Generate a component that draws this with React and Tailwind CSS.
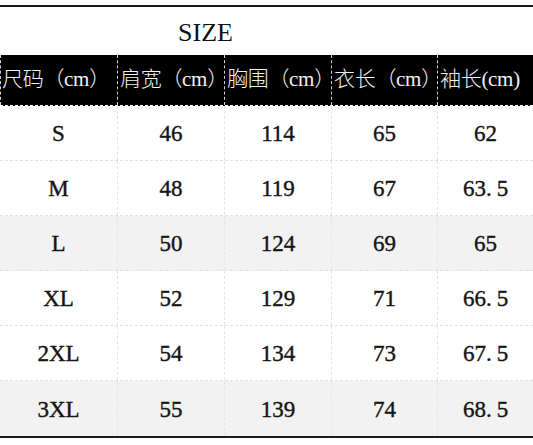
import React from 'react';

const headers = ['尺码（cm）', '肩宽（cm）', '胸围（cm）', '衣长（cm）', '袖长(cm)'];

const rows = [
    { size: 'S', vals: ['46', '114', '65', '62'], shade: false },
    { size: 'M', vals: ['48', '119', '67', '63.5'], shade: false },
    { size: 'L', vals: ['50', '124', '69', '65'], shade: true },
    { size: 'XL', vals: ['52', '129', '71', '66.5'], shade: false },
    { size: '2XL', vals: ['54', '134', '73', '67.5'], shade: false },
    { size: '3XL', vals: ['55', '139', '74', '68.5'], shade: true },
];

const serif = { fontFamily: '"Liberation Serif", "Noto Sans CJK SC", serif' };

// half sizes are typeset with a wide point, as in the source chart
const Num = ({ v }) => {
    if (!v.includes('.')) return v;
    const [a, b] = v.split('.');
    return (
        <>
            {a}
            <span className="mr-[5px]">.</span>
            {b}
        </>
    );
};

const App = () => {
    return (
        <div className="w-[533px] h-[445px] bg-white pt-[5px] overflow-hidden">
            {/* Top rule */}
            <div className="h-[2px] bg-[#1a1a1a]"></div>

            {/* Title */}
            <div className="h-[48px] flex items-center">
                <div style={serif} className="w-[411px] text-center text-[26px] text-[#111] pt-[3px]">
                    SIZE
                </div>
            </div>

            {/* Header */}
            <div className="grid grid-cols-[118px_107px_107px_106px_95px] h-[51px] bg-black border-b border-dashed border-white">
                {headers.map((h, i) => (
                    <div
                        key={i}
                        style={serif}
                        className={`flex items-center ${i === 0 ? 'border-l border-dashed border-white/80 pl-[1px]' : 'pl-[2px]'} ${i < 4 ? 'border-r border-dashed border-white/80' : ''} text-[21px] text-[#f2f2f2] whitespace-nowrap font-light tracking-[-0.3px]`}
                    >
                        {h}
                    </div>
                ))}
            </div>

            {/* Body */}
            {rows.map((r, i) => (
                <div
                    key={r.size}
                    className={`grid grid-cols-[118px_107px_107px_106px_95px] h-[55px] ${r.shade ? 'bg-[#f2f2f2]' : 'bg-white'} ${i < rows.length - 1 ? 'border-b border-dashed border-[#e2e2e2]' : ''}`}
                >
                    {[r.size, ...r.vals].map((v, j) => (
                        <div
                            key={j}
                            style={serif}
                            className={`flex items-center justify-center pt-[3px] text-[23px] text-[#151515] [-webkit-text-stroke:0.4px_#151515] ${j < 4 ? 'border-r border-dashed border-[#e4e4e4]' : ''}`}
                        >
                            <Num v={v} />
                        </div>
                    ))}
                </div>
            ))}

            {/* Bottom rule */}
            <div className="h-[2px] bg-[#1a1a1a]"></div>
        </div>
    );
};

export default App;
